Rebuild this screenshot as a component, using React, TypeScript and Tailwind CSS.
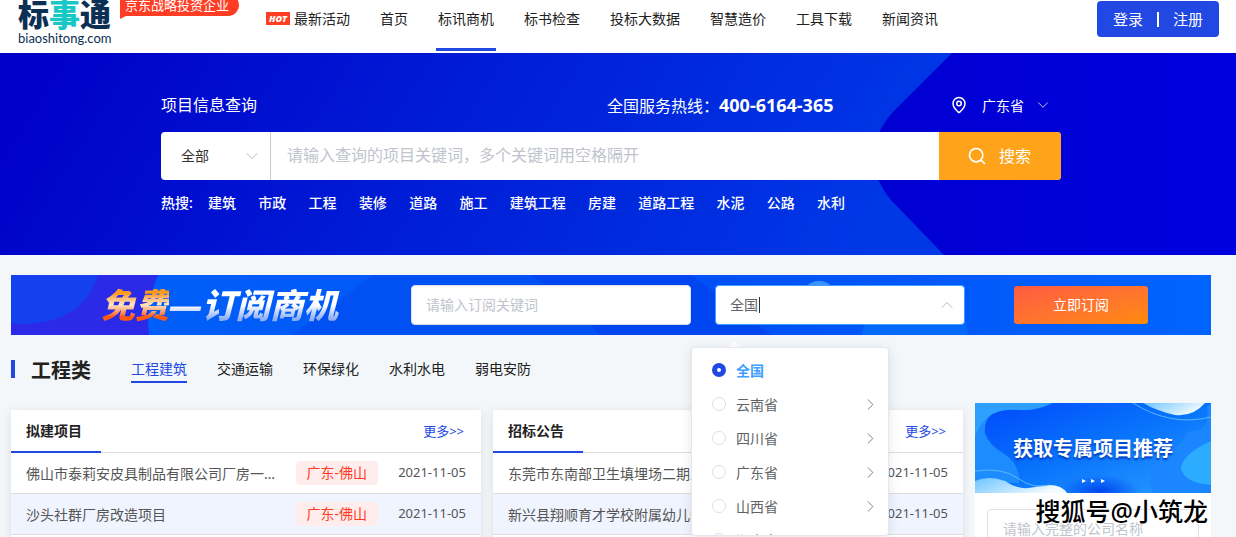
import type { ReactNode } from 'react'
import { ChevronDown, ChevronRight, ChevronUp, MapPin, Search } from 'lucide-react'

const NAV = ['最新活动', '首页', '标讯商机', '标书检查', '投标大数据', '智慧造价', '工具下载', '新闻资讯']
const HOT_WORDS = ['建筑', '市政', '工程', '装修', '道路', '施工', '建筑工程', '房建', '道路工程', '水泥', '公路', '水利']
const CATEGORIES = ['工程建筑', '交通运输', '环保绿化', '水利水电', '弱电安防']
const PROVINCES = ['全国', '云南省', '四川省', '广东省', '山西省', '湖南省']

interface Project {
  title: string
  area: string
  date: string
}

const PLANNED: Project[] = [
  { title: '佛山市泰莉安皮具制品有限公司厂房一期建设项目', area: '广东-佛山', date: '2021-11-05' },
  { title: '沙头社群厂房改造项目', area: '广东-佛山', date: '2021-11-05' },
  { title: '', area: '', date: '' },
]

const TENDERS: Project[] = [
  { title: '东莞市东南部卫生填埋场二期工程施工总承包', area: '广东-东莞', date: '2021-11-05' },
  { title: '新兴县翔顺育才学校附属幼儿园', area: '广东-云浮', date: '2021-11-05' },
  { title: '', area: '', date: '' },
]

function Header() {
  return (
    <header className="flex h-[53px] items-start bg-white pr-[17px] pl-[18px]">
      <a href="#" className="-mt-[2px] block w-[93px] shrink-0 text-[#0c3054]">
        <span className="block text-[31px] leading-8 font-black whitespace-nowrap">
          标<span className="text-[#17c8c4]">事</span>通
        </span>
        <span className="block font-['Lato',sans-serif] text-[13px] leading-4">biaoshitong.com</span>
      </a>
      <div className="relative -mt-[6px] ml-[9px] h-[22px] w-[119px] shrink-0 rounded-r-full bg-[#ff3d24] pl-[5px] text-[13px] leading-[22px] whitespace-nowrap text-white">
        京东战略投资企业
        <span className="absolute top-[21px] left-0 h-1 w-2 bg-[#ff3d24] [clip-path:polygon(0_0,100%_0,0_100%)]" />
      </div>
      <nav className="ml-[25px] flex gap-[26px]">
        {NAV.map((item) => (
          <a
            key={item}
            href="#"
            className={`flex h-[51px] gap-1 border-b-[3px] px-[2px] text-[14px] leading-[38px] whitespace-nowrap text-[#222] ${item === '标讯商机' ? 'border-[#2248e4]' : 'border-transparent'}`}
          >
            {item === '最新活动' && (
              <span className="mt-3 h-[13px] w-6 bg-[#ff3d24] text-center text-[9px] leading-[13px] font-black text-white italic">
                HOT
              </span>
            )}
            {item}
          </a>
        ))}
      </nav>
      <div className="mt-px ml-auto flex h-9 items-center gap-[14px] rounded bg-[#2248e4] px-4 text-[15px] whitespace-nowrap text-white">
        <button type="button">登录</button>
        <span className="h-[15px] w-[2px] bg-white" />
        <button type="button">注册</button>
      </div>
    </header>
  )
}

function HeroBackdrop() {
  return (
    <svg className="absolute inset-0 h-full w-full" viewBox="0 0 1236 202" preserveAspectRatio="none" aria-hidden="true">
      <defs>
        <linearGradient id="hero" x1="0" y1="0.4" x2="1" y2="0.5">
          <stop offset="0" stopColor="#0000c8" />
          <stop offset="0.35" stopColor="#001cd6" />
          <stop offset="0.75" stopColor="#0038e6" />
          <stop offset="1" stopColor="#0038e6" />
        </linearGradient>
        <linearGradient id="heroDark" x1="0" y1="0" x2="1" y2="0">
          <stop offset="0" stopColor="#0000d2" />
          <stop offset="1" stopColor="#0000de" />
        </linearGradient>
      </defs>
      <rect width="1236" height="202" fill="url(#hero)" />
      <path d="M952 0 L892 60 Q856 102 890 146 L944 202 H1236 V0Z" fill="url(#heroDark)" />
    </svg>
  )
}

function Hero() {
  return (
    <section className="relative h-[202px] pr-[14px] text-white">
      <HeroBackdrop />
      <div className="relative mx-auto max-w-[900px] pt-10">
        <div className="flex h-6 items-center text-[16px]">
          <h2 className="w-[446px]">项目信息查询</h2>
          <p className="leading-6 whitespace-nowrap">
            全国服务热线：<b className="text-[18px]">400-6164-365</b>
          </p>
          <button type="button" className="mr-[9px] ml-auto flex items-center text-[14px]">
            <MapPin size={18} strokeWidth={2} className="mr-[14px]" />
            广东省
            <ChevronDown size={18} strokeWidth={1} className="ml-[10px]" />
          </button>
        </div>

        <form className="mt-[15px] flex h-12 overflow-hidden rounded bg-white" onSubmit={(e) => e.preventDefault()}>
          <div className="relative w-[110px] border-r border-[#ccc]">
            <select aria-label="类型" className="h-full w-full appearance-none pb-[2px] pl-5 text-[14px] text-[#333] outline-none">
              <option>全部</option>
            </select>
            <ChevronDown size={20} strokeWidth={1} className="pointer-events-none absolute top-[14px] right-2 text-[#a8acb4]" />
          </div>
          <input
            aria-label="项目关键词"
            placeholder="请输入查询的项目关键词，多个关键词用空格隔开"
            className="min-w-0 flex-1 px-4 pb-[2px] text-[16px] text-[#333] outline-none placeholder:text-[#c0c4cc]"
          />
          <button type="submit" className="flex w-[122px] items-center justify-center gap-3 bg-[#ffa31a] pr-[2px] text-[16px] text-white">
            <Search size={20} strokeWidth={2} />
            搜索
          </button>
        </form>

        <div className="mt-3 flex max-w-[684px] justify-between text-[14px] leading-[22px] font-medium whitespace-nowrap">
          <span className="-mr-[7px]">热搜:</span>
          {HOT_WORDS.map((word) => (
            <a key={word} href="#">
              {word}
            </a>
          ))}
        </div>
      </div>
    </section>
  )
}

function BannerBackdrop() {
  return (
    <svg className="absolute inset-0 h-full w-full" viewBox="0 0 1200 60" preserveAspectRatio="none" aria-hidden="true">
      <defs>
        <linearGradient id="banner" x1="0" y1="0" x2="1" y2="0">
          <stop offset="0" stopColor="#0062f8" />
          <stop offset="0.35" stopColor="#0058f8" />
          <stop offset="0.6" stopColor="#0050f6" />
          <stop offset="1" stopColor="#0064ff" />
        </linearGradient>
      </defs>
      <rect width="1200" height="60" fill="url(#banner)" />
      <path d="M0 0H147Q134 28 138 60H0Z" fill="#2a2ae8" />
      <path d="M0 0H87Q72 48 12 49Q4 49 0 47Z" fill="#1440f0" />
      <path d="M362 0H520L586 60H280Q310 40 362 0Z" fill="#0050f4" />
      <path d="M519 0H680L760 60H588Q560 26 519 0Z" fill="#0046f0" />
      <circle cx="808" cy="24" r="18" fill="#3c92ff" />
      <path d="M850 60Q862 22 905 14Q955 20 957 60Z" fill="#0068fa" />
    </svg>
  )
}

function ProvinceMenu() {
  return (
    <div className="absolute top-[62px] -left-6 z-20 w-[198px]">
      <span className="absolute -top-1 left-[37px] size-3 rotate-45 bg-white" />
      <ul className="relative h-[189px] overflow-hidden rounded border border-[#e4e7ed] bg-white py-[5px] shadow-[0_2px_12px_rgba(0,0,0,0.1)]">
        {PROVINCES.map((name, i) => (
          <li key={name} className="pr-2 pl-5">
            <label className={`flex h-[34px] items-center text-[14px] ${i === 0 ? 'font-bold text-[#409eff]' : 'text-[#606266]'}`}>
              <input
                type="radio"
                name="province"
                defaultChecked={i === 0}
                className="mr-[10px] size-[14px] appearance-none rounded-full border border-[#dcdfe6] bg-white checked:border-[5px] checked:border-[#2248e4]"
              />
              {name}
              {i > 0 && <ChevronRight size={19} strokeWidth={1} className="ml-auto" />}
            </label>
          </li>
        ))}
      </ul>
    </div>
  )
}

function SubscribeBanner() {
  return (
    <section className="relative flex h-[60px] items-center">
      <BannerBackdrop />
      <h2 className="relative w-[400px] shrink-0 pl-[90px] text-[34px] leading-[52px] font-black whitespace-nowrap italic">
        <span className="bg-gradient-to-b from-[#ff9a20] from-25% via-[#ffe6c0] via-50% to-[#ff5a10] to-75% bg-clip-text text-transparent">免费</span>
        <span className="bg-gradient-to-b from-white from-50% to-[#90b0f4] to-80% bg-clip-text pr-2 text-transparent">—订阅商机</span>
      </h2>
      <input
        aria-label="订阅关键词"
        placeholder="请输入订阅关键词"
        className="relative h-10 w-[280px] rounded border border-[#dcdfe6] bg-white px-[14px] pb-[2px] text-[14px] outline-none placeholder:text-[#c0c4cc]"
      />
      <div className="relative ml-6 w-[250px]">
        <input
          aria-label="地区"
          defaultValue="全国"
          className="block h-10 w-full rounded border border-[#409eff] bg-white px-[14px] pb-[2px] text-[14px] text-[#606266] outline-none"
        />
        <span className="absolute top-3 left-[44px] h-4 w-px bg-[#333]" />
        <ChevronUp size={20} strokeWidth={1} className="absolute top-[10px] right-2 text-[#a8acb4]" />
        <ProvinceMenu />
      </div>
      <button
        type="button"
        className="relative ml-[49px] h-[38px] w-[134px] rounded-[3px] bg-gradient-to-br from-[#ff5a40] to-[#ff8a00] pb-[2px] text-[14px] text-white"
      >
        立即订阅
      </button>
    </section>
  )
}

function ProjectCard({ title, rows }: { title: string; rows: Project[] }) {
  return (
    <section className="mt-[7px] min-w-0 flex-1 bg-white shadow-[0_2px_10px_rgba(0,0,0,0.1)]">
      <div className="flex h-[43px] items-start justify-between border-b border-[#ddd] pr-[17px] leading-[42px]">
        <h3 className="h-[43px] w-[90px] border-b-2 border-[#2248e4] pl-[15px] text-[14px] font-bold text-[#222]">{title}</h3>
        <a href="#" className="text-[13px] text-[#2248e4]">
          更多&gt;&gt;
        </a>
      </div>
      <ul>
        {rows.map((row, i) => (
          <li key={i} className="flex h-[41px] items-center border-b border-[#ddd] px-[15px] text-[14px] text-[#555] even:bg-[#f0f4ff]">
            {row.title && (
              <>
                <a href="#" className="w-[252px] truncate">
                  {row.title}
                </a>
                <span className="ml-auto rounded bg-[#ffeded] px-[11px] leading-6 whitespace-nowrap text-[#ff3b1f]">{row.area}</span>
                <time className="ml-5 text-[13px]">{row.date}</time>
              </>
            )}
          </li>
        ))}
      </ul>
    </section>
  )
}

function RecommendArt() {
  return (
    <svg className="absolute inset-0 h-full w-full" viewBox="0 0 236 90" preserveAspectRatio="none" aria-hidden="true">
      <defs>
        <linearGradient id="art" x1="0" y1="0" x2="1" y2="1">
          <stop offset="0" stopColor="#0048fa" />
          <stop offset="0.5" stopColor="#0874fc" />
          <stop offset="1" stopColor="#2a9cff" />
        </linearGradient>
        <linearGradient id="cloud" x1="0" y1="0" x2="1" y2="0.4">
          <stop offset="0" stopColor="#6cc4ff" />
          <stop offset="1" stopColor="#f4fbff" />
        </linearGradient>
        <radialGradient id="glow">
          <stop offset="0" stopColor="#0044f0" />
          <stop offset="1" stopColor="#0044f0" stopOpacity="0" />
        </radialGradient>
      </defs>
      <rect width="236" height="90" fill="url(#art)" />
      <ellipse cx="125" cy="88" rx="40" ry="16" fill="url(#glow)" />
      <path d="M0 0H78Q60 10 34 6Q8 8 10 30Q14 42 28 50Q46 62 44 80L0 78Z" fill="#1c8cff" />
      <path d="M0 0H76Q62 8 42 7Q10 4 0 34Z" fill="#2ea0ff" />
      <path d="M214 28Q236 30 232 4L236 0V90H178Q168 66 190 52Q206 42 214 28Z" fill="#1a86ff" />
      <path d="M236 38Q206 52 206 66Q210 80 236 82Z" fill="#2cacff" />
      <path d="M168 0H230Q218 14 200 12Q182 8 168 0Z" fill="url(#cloud)" />
      <path d="M158 0Q196 24 236 14" fill="none" stroke="#58b8ff" strokeWidth="1" />
      <path d="M0 78Q14 72 30 78Q44 88 60 84Q84 78 92 90H0Z" fill="url(#cloud)" />
      <path d="M0 68Q28 64 44 76Q58 86 74 82" fill="none" stroke="#58b8ff" strokeWidth="1" />
      <path d="M107 76l4 2-4 2zM116 76l4 2-4 2zM126 76l4 2-4 2z" fill="#fff" />
    </svg>
  )
}

function RecommendPanel() {
  return (
    <aside className="relative w-[236px] shrink-0 bg-white">
      <div className="relative h-[90px] text-center text-[20px] leading-[92px] font-bold text-white [text-shadow:0_2px_2px_#0038b8]">
        <RecommendArt />
        <h3 className="relative">获取专属项目推荐</h3>
      </div>
      <div className="px-3 py-4">
        <input
          aria-label="公司名称"
          placeholder="请输入完整的公司名称"
          className="h-10 w-full rounded border border-[#dcdfe6] px-[15px] pb-[2px] text-[14px] outline-none placeholder:text-[#c0c4cc]"
        />
      </div>
      <p className="absolute top-[90px] right-[3px] text-[25px] leading-9 font-medium whitespace-nowrap text-black [paint-order:stroke_fill] [-webkit-text-stroke:2px_white]">
        搜狐号@小筑龙
      </p>
    </aside>
  )
}

function Container({ children }: { children: ReactNode }) {
  return <main className="mr-[25px] ml-[11px] pt-5">{children}</main>
}

export default function App() {
  return (
    <div className="h-screen overflow-x-hidden overflow-y-auto bg-[#f3f7fa] font-['Noto_Sans','Noto_Sans_CJK_SC',sans-serif] [scrollbar-width:none]">
      <Header />
      <Hero />
      <Container>
        <SubscribeBanner />
        <div className="mt-[22px] flex h-7 items-center">
          <span className="-mt-1 h-[18px] w-1 bg-[#2248e4]" />
          <h2 className="ml-4 text-[20px] font-bold text-[#222]">工程类</h2>
          <div className="ml-10 flex gap-[30px] pb-[2px] text-[14px] whitespace-nowrap text-[#222]">
            {CATEGORIES.map((name, i) => (
              <a key={name} href="#" className={`border-b-2 leading-6 ${i === 0 ? 'border-[#2248e4] text-[#2248e4]' : 'border-transparent'}`}>
                {name}
              </a>
            ))}
          </div>
        </div>
        <div className="mt-[18px] flex gap-3">
          <ProjectCard title="拟建项目" rows={PLANNED} />
          <ProjectCard title="招标公告" rows={TENDERS} />
          <RecommendPanel />
        </div>
      </Container>
    </div>
  )
}
